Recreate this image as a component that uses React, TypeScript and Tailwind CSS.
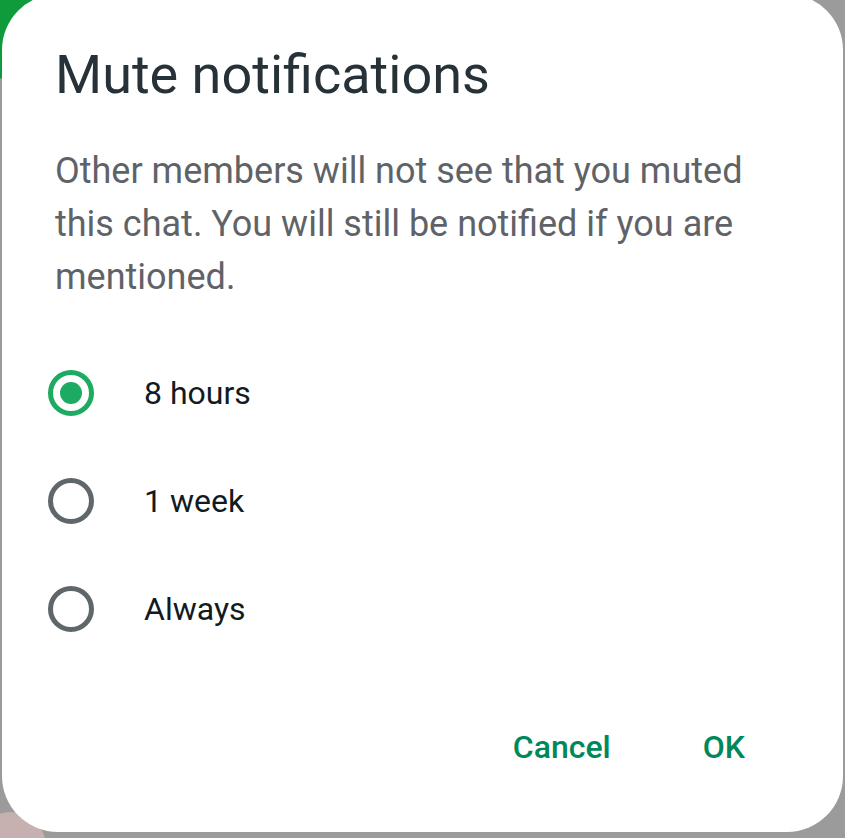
import { useState } from 'react'

const options = ['8 hours', '1 week', 'Always']

function Radio({ checked }: { checked: boolean }) {
  return (
    <span
      className={`flex h-[46px] w-[46px] shrink-0 items-center justify-center rounded-full border-[5px] ${
        checked ? 'border-[#1daa61]' : 'border-[#5f676b]'
      }`}
    >
      {checked && <span className="h-[22px] w-[22px] rounded-full bg-[#1daa61]" />}
    </span>
  )
}

export default function App() {
  const [picked, setPicked] = useState(0)

  return (
    <div
      className="relative h-[838px] w-[845px] overflow-hidden bg-[#9b9b9b]"
      style={{ fontFamily: 'Roboto, "Noto Sans", sans-serif' }}
    >
      {/* bits of the chat list showing behind the dialog */}
      <div className="absolute -left-[50px] -top-[50px] h-[130px] w-[130px] rounded-full bg-[#0f9a3c]" />
      <div className="absolute -bottom-[44px] -left-[24px] h-[70px] w-[70px] rounded-full bg-[#c7b0b0]" />

      <div className="relative -mt-[6px] ml-[2px] flex h-[838px] w-[841px] flex-col rounded-[56px] bg-white pl-[53px] pr-[78px]">
        <h1 className="mt-[49px] text-[54px] leading-[64px] text-[#263238]">Mute notifications</h1>

        <p className="mt-[38px] text-[36px] leading-[53px] text-[#5f6368]">
          Other members will not see that you muted this chat. You will still be notified if you are
          mentioned.
        </p>

        <div className="mt-[35px] flex flex-col">
          {options.map((o, i) => (
            <button
              key={o}
              onClick={() => setPicked(i)}
              className="-ml-[7px] flex h-[108px] items-center gap-[50px] text-left"
            >
              <Radio checked={picked === i} />
              <span className="text-[32px] text-[#111b21]">{o}</span>
            </button>
          ))}
        </div>

        <div className="mt-[60px] flex justify-end gap-[92px] pr-[20px]">
          <button className="text-[32px] font-medium text-[#00875a]">Cancel</button>
          <button className="text-[32px] font-medium text-[#00875a]">OK</button>
        </div>
      </div>
    </div>
  )
}
